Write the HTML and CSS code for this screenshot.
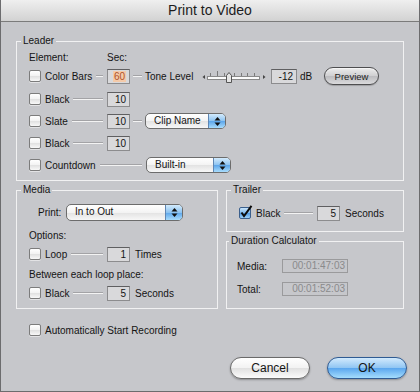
FILE: index.html
```html
<!DOCTYPE html>
<html lang="en">
<head>
    <meta charset="UTF-8">
    <title>Print to Video</title>
    <link rel="stylesheet" href="styles.css">
</head>
<body>
<div class="window">
    <div class="titlebar">Print to Video</div>
    <div class="content">
        <fieldset class="group leader">
            <legend>Leader</legend>
            <div class="heads"><span class="elem">Element:</span><span>Sec:</span></div>

            <div class="row first">
                <div class="elem"><span class="check"></span>Color Bars<span class="wire"></span></div>
                <span class="field"><span class="sel">60</span></span>
                <span class="wire link"></span>
                <span class="tone">Tone Level</span>
                <svg class="slider" width="68" height="16" viewBox="0 0 68 16">
                    <polygon points="2.5,9 5,7 5,11" fill="#444"/>
                    <rect x="7.5" y="8.5" width="52" height="3" fill="#fbfbfb" stroke="#8a8a8a"/>
                    <g stroke="#7a7a7a">
                        <line x1="10.5" y1="5" x2="10.5" y2="8"/>
                        <line x1="17.5" y1="3" x2="17.5" y2="8"/>
                        <line x1="24.5" y1="5" x2="24.5" y2="8"/>
                        <line x1="34.5" y1="5" x2="34.5" y2="8"/>
                        <line x1="41.5" y1="5" x2="41.5" y2="8"/>
                        <line x1="47.5" y1="5" x2="47.5" y2="8"/>
                        <line x1="54.5" y1="5" x2="54.5" y2="8"/>
                    </g>
                    <polygon points="63,7 65.5,9 63,11" fill="#444"/>
                    <path d="M26.5,14.5 v-7 l2.5,-3 l2.5,3 v7 z" fill="#e4e4e4" stroke="#555"/>
                </svg>
                <span class="field wide">-12</span>
                <span class="unit">dB</span>
                <span class="btn preview">Preview</span>
            </div>

            <div class="row">
                <div class="elem"><span class="check"></span>Black<span class="wire"></span></div>
                <span class="field">10</span>
            </div>

            <div class="row">
                <div class="elem"><span class="check"></span>Slate<span class="wire"></span></div>
                <span class="field">10</span>
                <span class="wire link"></span>
                <div class="popup clip">
                    <span class="val">Clip Name</span>
                    <span class="arrows"><svg width="7" height="11" viewBox="0 0 7 11"><polygon points="3.5,1 6.5,4.5 0.5,4.5" fill="#111"/><polygon points="3.5,10 6.5,6.5 0.5,6.5" fill="#111"/></svg></span>
                </div>
            </div>

            <div class="row">
                <div class="elem"><span class="check"></span>Black<span class="wire"></span></div>
                <span class="field">10</span>
            </div>

            <div class="row">
                <div class="elem long"><span class="check"></span>Countdown<span class="wire"></span></div>
                <div class="popup count">
                    <span class="val">Built-in</span>
                    <span class="arrows"><svg width="7" height="11" viewBox="0 0 7 11"><polygon points="3.5,1 6.5,4.5 0.5,4.5" fill="#111"/><polygon points="3.5,10 6.5,6.5 0.5,6.5" fill="#111"/></svg></span>
                </div>
            </div>
        </fieldset>

        <div class="lower">
            <fieldset class="group media">
                <legend>Media</legend>
                <div class="print-row">
                    <span class="print-label">Print:</span>
                    <div class="popup inout">
                        <span class="val">In to Out</span>
                        <span class="arrows"><svg width="7" height="11" viewBox="0 0 7 11"><polygon points="3.5,1 6.5,4.5 0.5,4.5" fill="#111"/><polygon points="3.5,10 6.5,6.5 0.5,6.5" fill="#111"/></svg></span>
                    </div>
                </div>
                <div class="caption options">Options:</div>
                <div class="row loop">
                    <div class="elem"><span class="check"></span>Loop<span class="wire"></span></div>
                    <span class="field">1</span>
                    <span class="after">Times</span>
                </div>
                <div class="caption between">Between each loop place:</div>
                <div class="row between-row">
                    <div class="elem"><span class="check"></span>Black<span class="wire"></span></div>
                    <span class="field">5</span>
                    <span class="after">Seconds</span>
                </div>
            </fieldset>

            <div class="side">
                <fieldset class="group trailer">
                    <legend>Trailer</legend>
                    <div class="row">
                        <div class="elem">
                            <svg class="checked" width="14" height="14" viewBox="0 0 14 14">
                                <defs>
                                    <linearGradient id="aqua" x1="0" y1="0" x2="0" y2="1">
                                        <stop offset="0" stop-color="#cfe8fb"/>
                                        <stop offset="0.5" stop-color="#7fb9ee"/>
                                        <stop offset="0.51" stop-color="#4d98e4"/>
                                        <stop offset="1" stop-color="#a4d6fa"/>
                                    </linearGradient>
                                </defs>
                                <rect x="0.5" y="2.5" width="11" height="11" rx="1.5" fill="url(#aqua)" stroke="#3b5f8c"/>
                                <path d="M2.5,7.5 L5,11 L12.5,0.8" fill="none" stroke="#0c0c0c" stroke-width="2"/>
                            </svg>
                            Black<span class="wire"></span>
                        </div>
                        <span class="field">5</span>
                        <span class="after">Seconds</span>
                    </div>
                </fieldset>

                <fieldset class="group duration">
                    <legend>Duration Calculator</legend>
                    <div class="dur-row first">
                        <span class="dur-label">Media:</span>
                        <span class="time">00:01:47:03</span>
                    </div>
                    <div class="dur-row">
                        <span class="dur-label">Total:</span>
                        <span class="time">00:01:52:03</span>
                    </div>
                </fieldset>
            </div>
        </div>

        <div class="auto"><span class="check"></span>Automatically Start Recording</div>

        <div class="actions">
            <span class="btn cancel">Cancel</span>
            <span class="btn ok">OK</span>
        </div>
    </div>
</div>
</body>
</html>
```

FILE: styles.css
```css
* { box-sizing: border-box; }
body {
    margin: 0;
    font-family: "Liberation Sans", Arial, sans-serif;
    font-size: 10px;
    color: #141414;
}
.window {
    width: 420px;
    height: 392px;
    background: #c6c7cb;
    border: 1px solid #6c6c6e;
    border-top: 0;
}
.titlebar {
    height: 22px;
    border-bottom: 1px solid #7b7b7b;
    background: linear-gradient(#efefef, #d2d2d2);
    text-align: center;
    font-size: 14px;
    line-height: 21px;
    color: #1c1c1c;
}
.content { padding: 0 15px; }

/* group boxes */
.group {
    margin: 0;
    min-width: 0;
    border: 1px solid #f1f1f2;
}
.group legend {
    margin-left: -8px;
    padding: 0 2px;
    font-size: 10px;
    line-height: 12px;
}
.leader {
    margin-top: 13px;
    padding: 5px 10px 7px 12px;
}
.heads { display: flex; height: 12px; line-height: 12px; }

.row {
    display: flex;
    align-items: center;
    height: 16px;
    margin-top: 6px;
    white-space: nowrap;
}
.row.first { height: 18px; margin-top: 3px; }

.elem {
    display: flex;
    align-items: center;
    width: 78px;
    flex: none;
}
.elem.long { width: 117px; }
.check {
    width: 12px;
    height: 12px;
    flex: none;
    border: 1px solid #7c7c7c;
    border-radius: 2px;
    background: linear-gradient(#ffffff, #f2f2f2 50%, #e0e0e0 51%, #f8f8f8);
    box-shadow: 0 1px 0 rgba(255, 255, 255, 0.5);
    margin-right: 4px;
}
.checked { flex: none; margin-right: 3px; margin-top: -2px; }
.wire {
    flex: 1;
    height: 1px;
    margin: 0 4px;
    background: #f3f3f3;
    box-shadow: 0 -1px 0 #a3a3a6;
}
.wire.link { flex: none; width: 9px; margin: 0 3px; }

.field {
    width: 23px;
    height: 15px;
    flex: none;
    border: 1px solid #8c8c8e;
    border-top-color: #5f5f61;
    background: #d9d9db;
    text-align: right;
    padding-right: 3px;
    line-height: 13px;
}
.field.wide { width: 26px; margin-left: 3px; }
.sel { background: #f4caa9; color: #b0522a; padding: 0 1px; }

.tone { width: 55px; flex: none; }
.slider { display: block; flex: none; }
.unit { width: 25px; padding-left: 3px; flex: none; }

/* popups */
.popup {
    display: flex;
    height: 16px;
    flex: none;
    border: 1px solid #6c6c6c;
    border-radius: 5px;
    overflow: hidden;
    background: linear-gradient(#ffffff, #f3f3f3 50%, #e2e2e2 51%, #f7f7f7);
}
.popup .val { flex: 1; padding-left: 8px; line-height: 14px; }
.popup .arrows {
    width: 17px;
    display: flex;
    align-items: center;
    justify-content: center;
    border-left: 1px solid #5f86b3;
    background: linear-gradient(#d3ebfd, #8cc3f1 50%, #5ba5ea 51%, #a8dcfc);
}
.clip { width: 81px; }
.count { width: 85px; }

/* buttons */
.btn {
    display: flex;
    align-items: center;
    justify-content: center;
    flex: none;
}
.preview {
    width: 55px;
    height: 18px;
    margin-left: 2px;
    border: 1px solid #4e4e50;
    border-radius: 9px;
    font-size: 9.5px;
    color: #1e1e1e;
    background: linear-gradient(#ececec, #cfcfd1 50%, #bcbcbf 51%, #dadadc);
    box-shadow: inset 0 1px 1px rgba(255, 255, 255, 0.6), 0 1px 1px rgba(0, 0, 0, 0.2);
}

/* lower part */
.lower {
    display: flex;
    gap: 8px;
    margin-top: 3px;
}
.media {
    width: 202px;
    flex: none;
    padding: 0 10px 7px 12px;
}
.print-row { display: flex; align-items: center; height: 17px; margin-top: 8px; }
.print-label { width: 28px; margin-left: 9px; flex: none; }
.inout { width: 117px; height: 17px; }
.caption { height: 12px; line-height: 12px; }
.options { margin-top: 9px; }
.row.loop { margin-top: 4px; }
.between { margin-top: 7px; }
.row.between-row { margin-top: 4px; }
.after { padding-left: 5px; }

.side {
    flex: 1;
    display: flex;
    flex-direction: column;
}
.trailer { padding: 3px 10px 10px 12px; }
.duration {
    flex: 1;
    margin-top: 3px;
    padding: 0 10px 0 10px;
}
.dur-row { display: flex; align-items: center; height: 14px; margin-top: 9px; }
.dur-row.first { margin-top: 12px; }
.dur-label { width: 45px; flex: none; }
.time {
    width: 66px;
    height: 14px;
    border: 1px solid #9a9a9c;
    color: #8a8a8c;
    text-align: right;
    padding-right: 2px;
    line-height: 12px;
}

.auto {
    display: flex;
    align-items: center;
    height: 12px;
    margin-top: 15px;
    padding-left: 13px;
}

.actions {
    display: flex;
    justify-content: flex-end;
    gap: 17px;
    margin-top: 21px;
    margin-right: -3px;
}
.cancel, .ok {
    width: 80px;
    height: 22px;
    border-radius: 11px;
    font-size: 12px;
    box-shadow: 0 1px 2px rgba(0, 0, 0, 0.3);
}
.cancel {
    border: 1px solid #6a6a6a;
    background: linear-gradient(#ffffff, #f2f2f2 50%, #e0e0e0 51%, #fbfbfb);
}
.ok {
    border: 1px solid #2f5b93;
    background: linear-gradient(#d2eafd, #8fc5f3 50%, #5aa6ee 51%, #a5ddfd);
}
```
